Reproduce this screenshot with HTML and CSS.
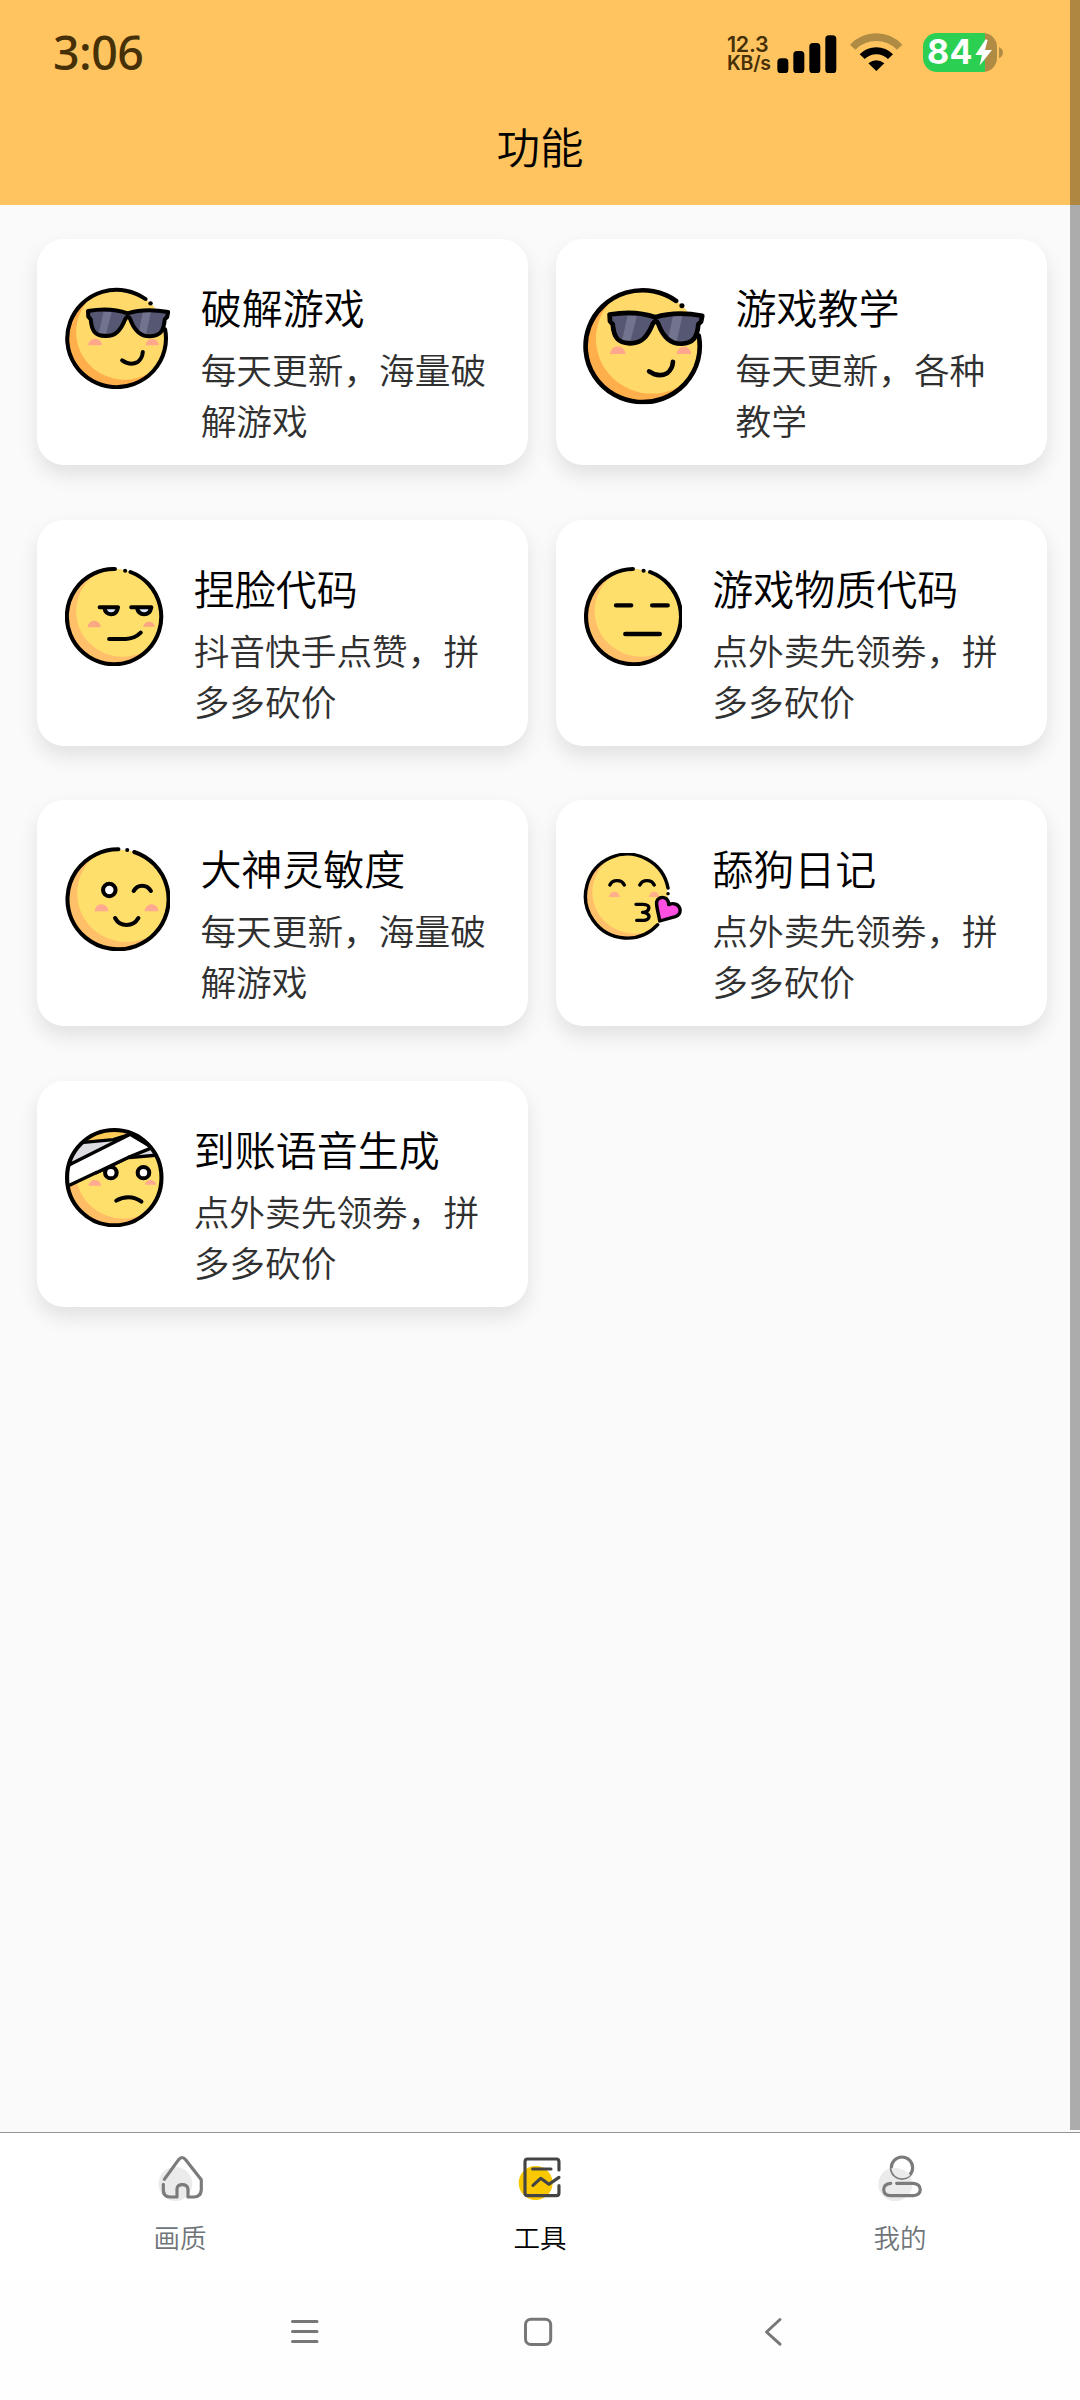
FILE: index.html
```html
<!DOCTYPE html>
<html lang="zh-CN">
<head>
<meta charset="utf-8">
<title>功能</title>
<link rel="stylesheet" href="styles.css">
</head>
<body>
<svg class="defs" aria-hidden="true">
  <symbol id="cool" viewBox="133 203 312 306" preserveAspectRatio="none">
    <clipPath id="c1"><circle cx="284" cy="356" r="146"/></clipPath>
    <g clip-path="url(#c1)">
      <circle cx="284" cy="356" r="146" fill="#ffae4c"/>
      <circle cx="309" cy="338" r="143" fill="#ffda6a"/>
    </g>
    <path class="ln" d="M371 239A146 146 0 1 0 429 330"/>
    <circle cx="386" cy="252" r="6.5"/>
    <path d="M202 378a20 20 0 0 1 40 0zM372 378a19 19 0 0 1 38 0z" fill="#ffa78d"/>
    <path d="M201 275C240 268 285 270 318 282C355 270 400 271 438 278L435 293L428 300C425 335 415 349 385 351C350 352 335 325 326 300Q319 285 311 300C298 333 282 351 252 350C222 349 212 335 209 300L202 292Z" fill="#565873"/>
    <path d="M247 278h24l-16 64h-22zM363 278h24l-14 66h-23z" fill="#72748f"/>
    <path class="ln" d="M201 275C240 268 285 270 318 282C355 270 400 271 438 278L435 293L428 300C425 335 415 349 385 351C350 352 335 325 326 300Q319 285 311 300C298 333 282 351 252 350C222 349 212 335 209 300L202 292Z"/>
    <path class="ln" d="M302 423Q326 440 348 428Q362 417 363 398"/>
  </symbol>
</svg>

<div class="app">
  <div class="top">
    <div class="status">
      <span class="time">3:06</span>
      <span class="net"><b class="rate">12.3</b><b class="unit">KB/s</b></span>
      <svg class="signal" viewBox="233 104 180 115"><rect x="234" y="174" width="33" height="45" rx="11"/><rect x="282" y="152" width="33" height="67" rx="11"/><rect x="330" y="128" width="33" height="91" rx="11"/><rect x="378" y="105" width="33" height="114" rx="11"/></svg>
      <svg class="wifi" viewBox="450 97 158 114">
        <path d="M450 132Q483 98 529 98Q574 98 607 132L591 147Q565 121 529 121Q492 121 466 147Z" fill="#b08b44"/>
        <path d="M479 161Q500 140 529 140Q558 140 579 161L564 175Q549 161 529 161Q509 161 494 175Z"/>
        <path d="M505 188Q529 170 553 188L529 211Z"/>
      </svg>
      <span class="battery"><span class="pct">84</span><svg class="bolt" viewBox="826 115 52 82"><path d="M858 116L827 163H847L840 195L877 148H856L864 118Z" fill="#fff"/></svg></span>
      <svg class="nub" viewBox="898 139 12 34"><path d="M898 139Q910 146 910 156Q910 166 898 173Z" fill="#b08b44"/></svg>
    </div>
    <h1 class="title">功能</h1>
  </div>

  <main class="grid">
    <section class="card">
      <svg class="face f1"><use href="#cool"/></svg>
      <div class="txt"><h2>破解游戏</h2><p>每天更新，海量破解游戏</p></div>
    </section>
    <section class="card">
      <svg class="face f2"><use href="#cool"/></svg>
      <div class="txt"><h2>游戏教学</h2><p>每天更新，各种教学</p></div>
    </section>
    <section class="card">
      <svg class="face f3" viewBox="133 200 290 298" preserveAspectRatio="none">
        <clipPath id="c3"><ellipse cx="278" cy="349" rx="139" ry="143"/></clipPath>
        <g clip-path="url(#c3)"><rect x="133" y="200" width="290" height="298" fill="#ffc069"/><circle cx="302" cy="333" r="136" fill="#ffdf6c"/></g>
        <path class="ln" d="M280 206A139 143 0 1 0 326 215"/><circle cx="310" cy="211" r="6"/>
        <path d="M200 381a19 20 0 0 1 38 0zM363 379a18 19 0 0 1 35 0z" fill="#f9a883"/>
        <path d="M250 322h38q-3 19-20 19t-18-19zM346 322h40q-4 19-20 19t-20-19z" fill="#dbe6ff"/>
        <path class="ln" d="M235 321H289Q286 342 269 342Q252 341 249 323M328 321H387Q383 342 366 342Q349 341 345 323"/>
        <path class="ln" d="M263 416H312Q338 415 356 397"/>
      </svg>
      <div class="txt"><h2>捏脸代码</h2><p>抖音快手点赞，拼多多砍价</p></div>
    </section>
    <section class="card">
      <svg class="face f4" viewBox="125 200 287 298" preserveAspectRatio="none">
        <clipPath id="c4"><ellipse cx="268" cy="349" rx="138" ry="143"/></clipPath>
        <g clip-path="url(#c4)"><rect x="125" y="200" width="287" height="298" fill="#ffc069"/><circle cx="295" cy="333" r="136" fill="#ffdf6c"/></g>
        <path class="ln" d="M270 206A138 143 0 1 0 320 215"/><circle cx="301" cy="211" r="6"/>
        <path class="ln thick" d="M221 315H265M326 315H371M248 401H348"/>
      </svg>
      <div class="txt"><h2>游戏物质代码</h2><p>点外卖先领劵，拼多多砍价</p></div>
    </section>
    <section class="card">
      <svg class="face f5" viewBox="133 203 311 313" preserveAspectRatio="none">
        <clipPath id="c5"><circle cx="288" cy="360" r="149"/></clipPath>
        <g clip-path="url(#c5)"><rect x="133" y="203" width="311" height="313" fill="#ffc069"/><circle cx="315" cy="342" r="146" fill="#ffdf6c"/></g>
        <path class="ln" d="M291 210A149.500 150 0 1 0 338 218"/><circle cx="317" cy="212" r="6"/>
        <path d="M221 396a20 21 0 0 1 40 0zM369 396a20 21 0 0 1 40 0z" fill="#ffa991"/>
        <circle class="ln white" cx="264" cy="332" r="18.5"/>
        <path class="ln" d="M336 335Q345 319 361 319Q378 319 387 335M281 416Q292 437 315 437Q338 437 350 416"/>
      </svg>
      <div class="txt"><h2>大神灵敏度</h2><p>每天更新，海量破解游戏</p></div>
    </section>
    <section class="card">
      <svg class="face f6" viewBox="125 221 287 263" preserveAspectRatio="none">
        <clipPath id="c6"><ellipse cx="251" cy="352" rx="120" ry="126"/></clipPath>
        <g clip-path="url(#c6)"><rect x="125" y="221" width="250" height="263" fill="#ffc069"/><circle cx="276" cy="339" r="124" fill="#ffdf6c"/></g>
        <path class="ln slim" d="M372 326A121 126 0 1 0 342 436"/><circle cx="372" cy="343" r="5"/>
        <path d="M200 353q3-16 16-16t16 16zM316 353q3-16 16-16t14 16z" fill="#ffb08a"/>
        <path class="ln slim" d="M203 317Q209 304 224 304Q239 304 245 317M290 317Q296 304 311 304Q326 304 332 317M279 375H300C324 375 320 397 298 399C324 400 322 425 298 423H281"/>
        <path class="ln slim pink" d="M348 425C344 400 337 380 339 367C342 355 354 352 363 356C371 360 374 367 374 376C388 369 402 375 406 387C410 400 402 409 393 412Z"/>
      </svg>
      <div class="txt"><h2>舔狗日记</h2><p>点外卖先领劵，拼多多砍价</p></div>
    </section>
    <section class="card">
      <svg class="face f7" viewBox="133 203 290 298" preserveAspectRatio="none">
        <clipPath id="c7"><ellipse cx="278" cy="352" rx="140" ry="143"/></clipPath>
        <g clip-path="url(#c7)">
          <rect x="133" y="203" width="290" height="298" fill="#ffbe66"/>
          <circle cx="305" cy="335" r="140" fill="#ffdf6c"/>
          <path d="M140 245L300 200L330 215L200 250Z" fill="#ffcb57"/>
          <path d="M180 248L290 240L320 228L150 312L140 290Z" fill="#dcdce2"/>
          <path d="M386 264L402 282L325 293Z" fill="#dcdce2"/>
          <path class="ln slim" d="M180 247L275 238L325 222M322 292L408 284"/>
          <path class="ln slim white" d="M140 316L325 222L390 262L320 291L140 378Z"/>
        </g>
        <path d="M202 376q4-17 19-17t19 17zM368 373q4-14 17-14t17 14z" fill="#ffa991"/>
        <circle class="ln white" cx="268" cy="337" r="17"/><circle class="ln white" cx="364" cy="337" r="17"/>
        <path d="M225 335L322 288L300 276L225 315Z" fill="#fff"/><path class="ln slim" d="M225 337L322 290"/>
        <ellipse class="ln" cx="278" cy="352" rx="139" ry="143"/>
        <path class="ln" d="M284 421Q300 411 320 411Q340 411 358 424"/>
      </svg>
      <div class="txt"><h2>到账语音生成</h2><p>点外卖先领劵，拼多多砍价</p></div>
    </section>
  </main>

  <nav class="tabs">
    <a class="tab">
      <svg viewBox="174 135 136 138">
        <circle cx="226" cy="222" r="51" fill="#ebebeb"/>
        <path class="tl" d="M193 208L236 149Q246 136 257 149L304 209V239Q303 261 282 261H264V237Q262 224 247 224Q232 224 231 237V261H210Q190 260 190 240V223"/>
      </svg>
      <span>画质</span>
    </a>
    <a class="tab on">
      <svg viewBox="1252 135 136 138">
        <circle cx="1308" cy="219" r="51" fill="#fac800"/>
        <path class="tl" d="M1378 180V155Q1378 147 1370 147H1284Q1276 147 1276 155V249Q1276 257 1284 257H1370Q1378 257 1378 249V227M1299 177H1354M1300 226L1323 205L1348 223L1378 202"/>
      </svg>
      <span>工具</span>
    </a>
    <a class="tab">
      <svg viewBox="892 135 136 138">
        <circle cx="944" cy="223" r="51" fill="#ebebeb"/>
        <circle class="tl white" cx="964" cy="173" r="32"/>
        <path d="M933 180a32 32 0 0 0 31 25q15 0 25-10q-18-20-45-22q-6 0-11 1z" fill="#ebebeb"/>
        <path class="tl" d="M930 220Q909 222 909 239Q910 257 930 257H998Q1018 256 1019 239Q1018 221 998 220H948"/>
      </svg>
      <span>我的</span>
    </a>
  </nav>

  <div class="sys">
    <svg viewBox="0 0 30 30"><path d="M2.500 4.500H27M2.500 14.500H27M2.500 24.500H27"/></svg>
    <svg viewBox="0 0 30 30"><rect x="1.500" y="2.300" width="25.200" height="25.200" rx="5.500"/></svg>
    <svg viewBox="0 0 30 30"><path d="M22 2.500L8.500 15L22 27.200"/></svg>
  </div>
  <div class="scrollbar"></div>
</div>
</body>
</html>
```
FILE: styles.css
```css
* { box-sizing: border-box; }
body { margin: 0; font-family: "Noto Sans CJK SC", sans-serif; font-weight: 350; background: #fafafa; }
h1, h2, p { margin: 0; font-weight: inherit; }
svg { display: block; flex: none; }
.defs { position: absolute; width: 0; height: 0; }
.app { position: relative; width: 1080px; height: 2400px; display: flex; flex-direction: column; overflow: hidden; }

.top { background: #ffc45f; height: 205px; flex: none; }
.status { height: 85px; padding: 33px 0 0 53px; display: flex; align-items: flex-start; font-family: "Noto Sans", sans-serif; color: #453008; }
.time { font-size: 46.5px; line-height: 38px; font-weight: 500; width: 674px; letter-spacing: -0.5px; }
.net { display: flex; flex-direction: column; width: 50px; font-family: "Inter", sans-serif; }
.net b { font-weight: 600; white-space: nowrap; }
.rate { font-size: 21.5px; line-height: 22px; letter-spacing: -0.3px; }
.unit { font-size: 19.5px; line-height: 17px; letter-spacing: -0.2px; }
.signal { width: 60px; height: 38.3px; margin-top: 1.7px; }
.wifi { width: 52.7px; height: 38px; margin-left: 13px; fill: #000; }
.battery { width: 74px; height: 38.5px; margin-left: 20.3px; border-radius: 14px; background: linear-gradient(90deg, #2bd052 62px, #b08b44 62px); display: flex; align-items: center; padding-left: 4px; }
.pct { font-size: 34px; line-height: 38px; font-weight: 700; color: #fff; width: 48px; letter-spacing: 0.5px; font-family: "Inter", sans-serif; }
.bolt { width: 17.3px; height: 27.3px; }
.nub { width: 4px; height: 11.3px; margin: 13.5px 0 0 2.5px; }
.title { height: 120px; line-height: 122px; text-align: center; font-size: 43.5px; color: #000; }

.grid { flex: 1; padding: 34px 33px 0 37px; display: grid; grid-template-columns: 491px 491px; grid-auto-rows: 226px; gap: 54.6px 28px; align-content: start; }
.card { background: #fff; border-radius: 27px; box-shadow: 0 10px 20px rgba(0, 0, 0, .1); padding: 39px 28px 0; display: flex; align-items: flex-start; }
.card:nth-child(even) { padding-left: 27.3px; }
.txt { flex: 1; min-width: 0; margin-left: 30.2px; }
h2 { font-size: 41px; line-height: 56px; color: #000; white-space: nowrap; }
p { margin-top: 9px; font-size: 35.7px; line-height: 51px; color: #303030; }

.face { margin-top: 8px; }
.f1 { width: 105.5px; height: 102px; margin-top: 9.3px; }
.f2 { width: 122px; height: 117.3px; margin-top: 9.3px; }
.f3 { width: 98.5px; height: 99.3px; }
.f4 { width: 98.8px; height: 99.3px; }
.f5 { width: 105.2px; height: 104.3px; }
.f6 { width: 98.8px; height: 87.7px; margin-top: 14px; }
.f7 { width: 98.5px; height: 99.3px; margin-top: 8px; }
.ln { fill: none; stroke: #000; stroke-width: 12; stroke-linecap: round; stroke-linejoin: round; }
.ln.slim { stroke-width: 10; }
.ln.thick { stroke-width: 13; }
.ln.pink { fill: #ff4fe0; }

.tabs { flex: none; height: 147px; border-top: 1px solid #929292; background: #fff; display: grid; grid-template-columns: repeat(3, 1fr); }
.tab { display: flex; flex-direction: column; align-items: center; padding-top: 22px; color: #70757a; }
.tab svg { width: 45.3px; height: 46px; margin-left: 1px; }
.tab span { font-size: 26.5px; line-height: 36px; margin-top: 18px; }
.tab.on { color: #000; }
.tab.on svg { margin-left: 0; }
.tl { fill: none; stroke: #7b7b7b; stroke-width: 9.5; stroke-linecap: round; stroke-linejoin: round; }
.on .tl { stroke: #444; }
.ln.white, .tl.white { fill: #fff; }

.sys { flex: none; height: 121px; background: #fefefe; display: flex; padding: 38px 0 0 290px; gap: 204px; }
.sys svg { width: 30px; height: 30px; fill: none; stroke: #777; stroke-width: 3; stroke-linecap: round; stroke-linejoin: round; }
.scrollbar { position: absolute; top: 0; right: 0; width: 10px; height: 2130px; background: rgba(0, 0, 0, .31); }
```
